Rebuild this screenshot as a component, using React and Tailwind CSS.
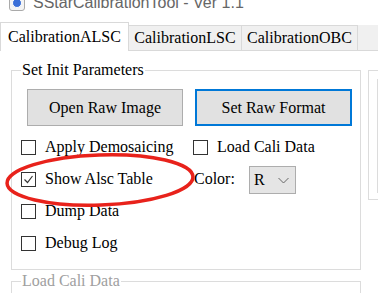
import React from "react";

const CheckBox = ({ checked, label }) => (
  <label className="flex items-center gap-[9px]">
    <span className="w-[15px] h-[15px] border border-[#333] bg-white flex items-center justify-center">
      {checked && (
        <svg width="11" height="11" viewBox="0 0 11 11">
          <path d="M1.5 5.5 L4.5 8.5 L9.5 2" fill="none" stroke="#333" strokeWidth="1.2" />
        </svg>
      )}
    </span>
    <span>{label}</span>
  </label>
);

const TitleBar = () => (
  <div className="h-[22px] overflow-hidden">
    <div className="flex items-center gap-[8px] pl-[9px] -mt-[7px] [font-family:'Liberation_Sans',sans-serif] text-[16px] leading-[20px] text-[#666]">
      <span className="w-[16px] h-[16px] rounded-[3px] border border-[#aaa] bg-[#f4f4f4] flex items-center justify-center">
        <span className="w-[10px] h-[10px] rounded-full bg-[#3a6fd8] border border-white" />
      </span>
      <span>SStarCalibrationTool - Ver 1.1</span>
    </div>
  </div>
);

const Tabs = () => {
  const tabs = ["CalibrationALSC", "CalibrationLSC", "CalibrationOBC"];
  return (
    <div className="flex h-[29px] items-start">
      <div className="w-[129px] h-[29px] bg-white border border-b-0 border-[#d9d9d9] flex items-center justify-center">
        {tabs[0]}
      </div>
      <div className="w-[113px] h-[26px] mt-[3px] bg-[#f0f0f0] border-t border-r border-b border-[#d9d9d9] flex items-center justify-center">
        {tabs[1]}
      </div>
      <div className="w-[116px] h-[26px] mt-[3px] bg-[#f0f0f0] border-t border-r border-b border-[#d9d9d9] flex items-center justify-center">
        {tabs[2]}
      </div>
      <div className="flex-1 h-[26px] mt-[3px] bg-[#f0f0f0] border-b border-[#d9d9d9]" />
    </div>
  );
};

export default function App() {
  return (
    <div className="relative w-[378px] h-[293px] overflow-hidden bg-white text-black [font-family:'Liberation_Serif',serif] text-[16px] leading-[18px]">
      <TitleBar />
      <Tabs />

      {/* tab page */}
      <div className="flex gap-[7px] pl-[11px] pt-[10px]">
        <div className="flex flex-col gap-[2px]">
          <fieldset className="w-[350px] h-[209px] border border-[#dcdcdc] pl-[9px]">
            <legend className="px-[1px] leading-[18px]">Set Init Parameters</legend>
            <div className="flex gap-[12px] ml-[6px] mt-[10px]">
              <button className="w-[156px] h-[37px] bg-[#e1e1e1] border border-[#adadad]">
                Open Raw Image
              </button>
              <button className="w-[157px] h-[37px] bg-[#e1e1e1] border-2 border-[#0078d7]">
                Set Raw Format
              </button>
            </div>
            <div className="flex flex-col mt-[5px]">
              <div className="flex h-[32px] items-center">
                <div className="w-[172px]">
                  <CheckBox label="Apply Demosaicing" />
                </div>
                <CheckBox label="Load Cali Data" />
              </div>
              <div className="flex h-[32px] items-center">
                <div className="w-[173px]">
                  <CheckBox checked label="Show Alsc Table" />
                </div>
                <span className="w-[55px]">Color:</span>
                <div className="w-[47px] h-[28px] mt-[2px] bg-[#e5e5e5] border border-[#adadad] flex items-center pl-[4px] pr-[6px] justify-between">
                  <span>R</span>
                  <svg width="11" height="7" viewBox="0 0 11 7">
                    <path d="M0.5 1 L5.5 6 L10.5 1" fill="none" stroke="#666" strokeWidth="1" />
                  </svg>
                </div>
              </div>
              <div className="flex h-[32px] items-center">
                <CheckBox label="Dump Data" />
              </div>
              <div className="flex h-[32px] items-center">
                <CheckBox label="Debug Log" />
              </div>
            </div>
          </fieldset>
          <fieldset className="w-[350px] h-[40px] border border-[#dcdcdc]">
            <legend className="ml-[9px] px-[1px] leading-[18px] text-[#a0a0a0]">Load Cali Data</legend>
          </fieldset>
        </div>

        <fieldset className="w-[40px] h-[139px] border border-[#dcdcdc] pl-[8px]">
          <legend className="text-[0px] leading-[18px]">&nbsp;</legend>
          <div className="h-[114px] border-l border-t border-[#dcdcdc] bg-white" />
        </fieldset>
      </div>

      {/* red annotation ellipse */}
      <svg className="absolute left-0 top-0 pointer-events-none" width="378" height="293" viewBox="0 0 378 293">
        <ellipse
          cx="100"
          cy="180"
          rx="93"
          ry="25"
          fill="none"
          stroke="#e8221b"
          strokeWidth="3.5"
          transform="rotate(-2 100 180)"
        />
      </svg>
    </div>
  );
}
